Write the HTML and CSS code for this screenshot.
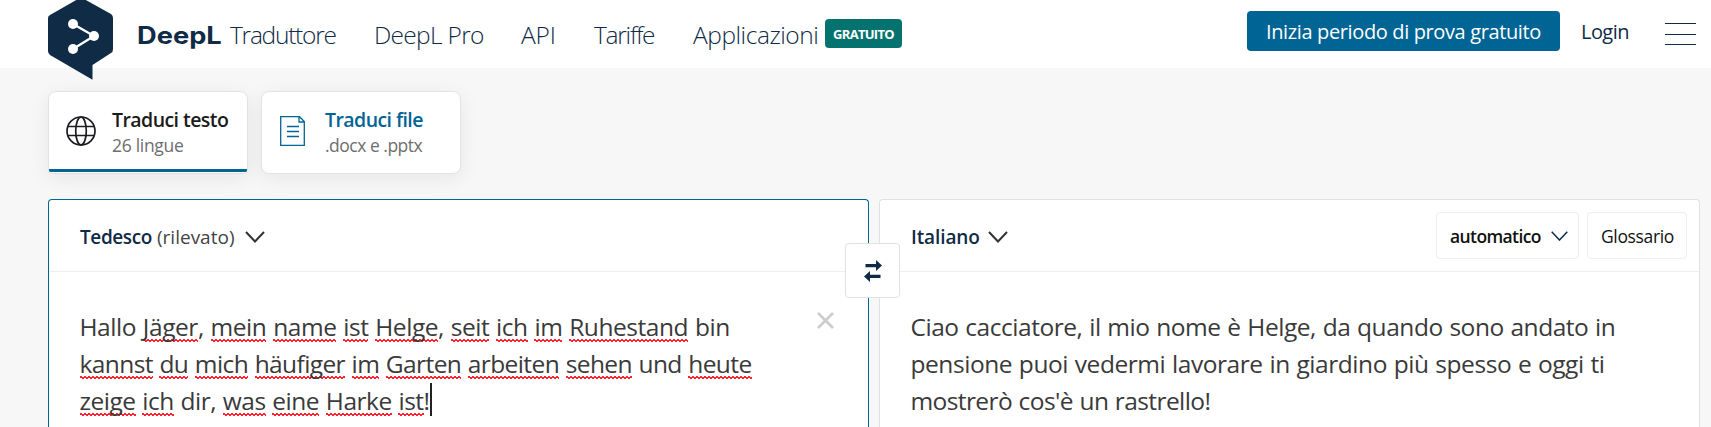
FILE: index.html
```html
<!DOCTYPE html>
<html lang="it">
<head>
<meta charset="utf-8">
<title>DeepL Traduttore</title>
<link rel="stylesheet" href="styles.css">
</head>
<body>
<header class="header">
  <svg class="logo" width="66" height="82" viewBox="0 0 66 82"><path d="M2 17 30 1q3-1.600 6 0L63 16q2 1.500 2 4V51q0 3-2 4L44.500 67V81.800L2 57q-2-1.500-2-4V20q0-2 2-3Z" fill="#0f2b46"/><path d="M25 26 46 38 25 51" fill="none" stroke="#fff" stroke-width="2.300"/><g fill="#fff"><circle cx="25" cy="26" r="5"/><circle cx="46" cy="38" r="5"/><circle cx="25" cy="51" r="5"/></g></svg>
  <span class="brand">DeepL</span>
  <nav class="nav">
    <a class="n1">Traduttore</a>
    <a class="n2">DeepL Pro</a>
    <a class="n3">API</a>
    <a class="n4">Tariffe</a>
    <a class="n5">Applicazioni</a>
  </nav>
  <span class="badge">GRATUITO</span>
  <div class="account">
    <a class="trial">Inizia periodo di prova gratuito</a>
    <a class="login">Login</a>
    <svg width="31" height="24" viewBox="0 0 31 24"><path d="M0 1.500H31M0 12.500H31M0 22.500H31" stroke="#0f2b46"/></svg>
  </div>
</header>
<main class="main">
  <div class="tabs">
    <div class="tab active">
      <svg width="30" height="30" viewBox="0 0 30 30" fill="none" stroke="#1b1b22" stroke-width="1.700"><circle cx="15" cy="15" r="14"/><ellipse cx="15" cy="15" rx="5.300" ry="14"/><path d="M2 10.500H28M2 19.500H28"/></svg>
      <div class="tabtext"><b class="t1">Traduci testo</b><span class="t2">26 lingue</span></div>
    </div>
    <div class="tab file">
      <svg width="30" height="30" viewBox="0 0 30 30" fill="none" stroke="#006494" stroke-width="1.300"><path d="M1.700.7H20.500L25.300 5.500V29.300H1.700ZM20 1V6H25M8 10.500H20M8 15.500H20M8 20.500H20"/></svg>
      <div class="tabtext"><b class="t3">Traduci file</b><span class="t4">.docx e .pptx</span></div>
    </div>
  </div>
  <div class="panels">
    <section class="panel source">
      <div class="bar"><b class="lang l1">Tedesco</b><span class="detected">(rilevato)</span><svg width="20" height="12" viewBox="0 0 20 12"><path d="M1 1 10 10.500 19 1" fill="none" stroke="#333" stroke-width="2"/></svg></div>
      <div class="body">
        <p class="s1">Hallo <u>Jäger</u>, <u>mein</u> <u>name</u> <u>ist</u> <u>Helge</u>, <u>seit</u> <u>ich</u> <u>im</u> <u>Ruhestand</u> bin</p>
        <p class="s2"><u>kannst</u> <u>du</u> <u>mich</u> <u>häufiger</u> <u>im</u> <u>Garten</u> <u>arbeiten</u> <u>sehen</u> und <u>heute</u></p>
        <p class="s3"><u>zeige</u> <u>ich</u> dir, <u>was</u> <u>eine</u> <u>Harke</u> <u>ist</u>!<i class="caret"></i></p>
      </div>
      <svg class="clear" width="17" height="17" viewBox="0 0 17 17"><path d="M1 1 16 16M16 1 1 16" stroke="#ccc" stroke-width="2.600"/></svg>
    </section>
    <section class="panel target">
      <div class="bar"><b class="lang l2">Italiano</b><svg width="20" height="12" viewBox="0 0 20 12"><path d="M1 1 10 10.500 19 1" fill="none" stroke="#333" stroke-width="2"/></svg>
        <div class="tools"><a class="tone"><span>automatico</span><svg width="17" height="10" viewBox="0 0 17 10"><path d="M.7.700 8.500 9 16.300.700" fill="none" stroke="#0f2b46" stroke-width="1.500"/></svg></a><a class="glossary">Glossario</a></div>
      </div>
      <div class="body">
        <p class="s4">Ciao cacciatore, il mio nome è Helge, da quando sono andato in</p>
        <p class="s5">pensione puoi vedermi lavorare in giardino più spesso e oggi ti</p>
        <p class="s6">mostrerò cos'è un rastrello!</p>
      </div>
    </section>
    <div class="swap"><svg width="18" height="22" viewBox="0 0 18 22"><path d="M1.500 4H12V0L18 5.500 12 11V7.200H1.500ZM16.500 14.800H6V11L0 16.500 6 22V18H16.500Z" fill="#0f2b46"/></svg></div>
  </div>
</main>
</body>
</html>
```
FILE: styles.css
```css
* { box-sizing: border-box; }
body { margin: 0; width: 1711px; height: 427px; overflow: hidden; background: #f7f7f7; font-family: "Open Sans", "Noto Sans", sans-serif; color: #0f2b46; }
svg { display: block; flex: none; }
.header { display: flex; height: 68px; background: #fff; padding-left: 48px; white-space: nowrap; }
.logo { margin-top: -2px; position: relative; z-index: 2; }
.brand { width: 93px; margin-left: 23px; font: 700 24px/34px Inter, sans-serif; margin-top: 19px; transform: scaleX(1.135); transform-origin: left; }
.nav { display: flex; font-size: 24.5px; font-weight: 300; line-height: 34px; margin-top: 18px; }
.nav a { display: block; }
.n1 { width: 144px; letter-spacing: -1.25px; }
.n2 { width: 147px; letter-spacing: -.7px; }
.n3 { width: 73px; letter-spacing: -.1px; }
.n4 { width: 99px; letter-spacing: -1.25px; }
.n5 { width: 132px; letter-spacing: -.45px; }
.badge { width: 77px; height: 29px; margin-top: 19px; border-radius: 4px; background: #04736f; color: #fff; font-size: 13px; font-weight: 700; line-height: 30px; text-align: center; letter-spacing: -.7px; }
.account { display: flex; margin-left: auto; padding-right: 15px; }
.trial { width: 313px; height: 40px; margin-top: 11px; border-radius: 4px; background: #006494; color: #fff; font-size: 20px; line-height: 42px; padding-left: 19px; letter-spacing: -.37px; }
.login { width: 84px; margin: 11px 0 0 21px; font-size: 20px; line-height: 42px; letter-spacing: -.55px; }
.account svg { margin-top: 22px; }
.main { padding: 23px 11px 0 48px; }
.tabs { display: flex; gap: 13px; }
.tab { display: flex; width: 200px; height: 83px; border: 1px solid #e3e3e3; border-radius: 8px; background: #fff; padding: 24px 0 0 17px; box-shadow: 0 4px 20px rgba(0,0,0,.07); white-space: nowrap; }
.active { border-radius: 8px 8px 4px 4px; background: linear-gradient(#006494, #006494) 0 77px/100% 3px no-repeat #fff; }
.tabtext { margin: -9px 0 0 16px; }
.tabtext b, .tabtext span { display: block; }
.tabtext b { font-size: 19.5px; font-weight: 600; line-height: 26px; color: #1b1b1b; letter-spacing: -.56px; }
.tabtext span { font-size: 17.5px; line-height: 24px; color: #6e6e6e; letter-spacing: -.3px; }
.tabtext .t4 { letter-spacing: -.5px; }
.file .t3 { color: #006494; }
.panels { display: flex; gap: 10px; margin-top: 25px; position: relative; }
.panel { width: 821px; height: 228px; background: #fff; border: 1px solid #e1e1e1; border-bottom: 0; border-radius: 4px 4px 0 0; position: relative; }
.source { border-color: #006494; }
.bar { display: flex; align-items: center; height: 72px; border-bottom: 1px solid #eee; padding-left: 31px; white-space: nowrap; font-size: 19px; line-height: 26px; }
.lang, .detected { padding-top: 2px; }
.lang { font-weight: 600; }
.bar > svg { margin-top: 3px; }
.l1 { width: 77px; letter-spacing: -.4px; }
.l2 { width: 77px; letter-spacing: -.1px; }
.detected { width: 88px; color: #444; }
.tools { display: flex; gap: 8px; margin-left: auto; padding-right: 12px; font-size: 17.5px; font-weight: 600; color: #111; }
.tools a { display: flex; align-items: center; height: 47px; border: 1px solid #eee; border-radius: 4px; padding: 1px 0 0 13px; }
.tone { width: 143px; letter-spacing: -.6px; }
.tone span { width: 101px; }
.glossary { width: 100px; letter-spacing: -.35px; }
.tools .glossary { font-weight: 500; }
.body { padding: 36px 0 0 30.5px; font-size: 24.5px; line-height: 37px; color: #3a3a3a; white-space: nowrap; word-spacing: .8px; }
.body p { margin: 0; height: 37px; }
.s1 { letter-spacing: -.44px; }
.s2 { letter-spacing: -.6px; }
.s3 { letter-spacing: -.48px; }
.s4 { letter-spacing: -.46px; }
.s5 { letter-spacing: -.44px; }
.s6 { letter-spacing: -.6px; }
.body u { text-decoration: none; background: repeating-linear-gradient(90deg, #f23 0 2px, transparent 2px 4px) 0 calc(100% - 2px)/100% 2px no-repeat, repeating-linear-gradient(90deg, transparent 0 2px, #f23 2px 4px) 0 calc(100% - 1px)/100% 2px no-repeat; }
.caret { display: inline-block; width: 2px; height: 33px; background: #222; vertical-align: -6px; margin-top: -20px; }
.clear { position: absolute; right: 34px; top: 112px; }
.swap { position: absolute; left: 797px; top: 44px; width: 55px; height: 55px; border: 1px solid #e1e1e1; border-radius: 4px; background: #fff; display: grid; place-items: center; }
```
